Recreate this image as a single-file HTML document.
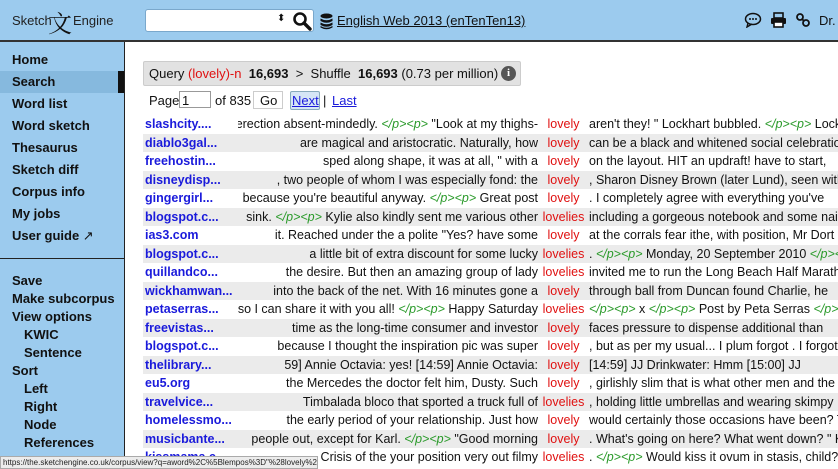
<!DOCTYPE html>
<html><head><meta charset="utf-8"><style>
*{margin:0;padding:0;box-sizing:border-box}
body{width:838px;height:469px;overflow:hidden;background:#fff;font-family:"Liberation Sans","DejaVu Sans",sans-serif;position:relative;color:#111}
.hdr{position:absolute;left:0;top:0;width:838px;height:42px;background:#9ccbee;border-bottom:2px solid #333}
.side{position:absolute;left:0;top:42px;width:125px;height:427px;background:#9ccbee;border-right:1px solid #222}
.side .it{position:absolute;left:12px;font-size:13px;font-weight:bold;color:#111;line-height:16px}
.side .sub{left:24px}
.side .sel{position:absolute;left:0;top:29px;width:124px;height:22px;background:#86b9de}
.side .selbar{position:absolute;left:118px;top:29px;width:6px;height:22px;background:#111}
.side .sep{position:absolute;left:0;top:216px;width:124px;height:1px;background:#222}
.a{position:absolute;font-size:13px;white-space:nowrap}
.row{position:absolute;left:143px;width:695px;height:18.5px;font-size:12.5px;line-height:18.5px;white-space:nowrap}
.row.g{background:#ebebeb}
.ref{position:absolute;left:2px;color:#1a1adb;font-weight:bold}
.lc{position:absolute;right:300px;width:300px;text-align:right;overflow:hidden;direction:rtl}
.lc span.in{direction:ltr;unicode-bidi:embed}
.kw{position:absolute;left:398px;width:45px;text-align:center;color:#e01010}
.rc{position:absolute;left:446px;overflow:hidden;width:260px}
.t{color:#2a9a2a;font-style:italic}
</style></head><body>
<div class="hdr">
 <div class="a" style="left:12px;top:13px;font-size:13px;color:#222">Sketch</div>
 <div class="a" style="left:48px;top:4px;font-size:24px;font-family:'Noto Serif CJK SC',serif;color:#111">文</div>
 <div class="a" style="left:73px;top:13px;font-size:13px;color:#222">Engine</div>
 <div style="position:absolute;left:145px;top:9px;width:169px;height:23px;background:#fff;border:1px solid #7aa8cc;border-radius:3px"></div>
 <div class="a" style="left:277px;top:13px;font-size:10px">⬍</div>
 <svg style="position:absolute;left:292px;top:11px" width="20" height="20" viewBox="0 0 20 20"><circle cx="8" cy="8" r="5.5" fill="none" stroke="#111" stroke-width="2.6"/><line x1="12" y1="12" x2="18" y2="18" stroke="#111" stroke-width="3.4" stroke-linecap="round"/></svg>
 <svg style="position:absolute;left:320px;top:13px" width="13" height="17" viewBox="0 0 13 17"><ellipse cx="6.5" cy="3" rx="6" ry="2.5" fill="#111"/><path d="M0.5 5.5 Q6.5 9 12.5 5.5 V8 Q6.5 11.5 0.5 8Z M0.5 9.5 Q6.5 13 12.5 9.5 V12 Q6.5 15.5 0.5 12Z M0.5 13 Q6.5 16.5 12.5 13 V14.5 Q6.5 18 0.5 14.5Z" fill="#111"/></svg>
 <div class="a" style="left:337px;top:13px;text-decoration:underline;color:#111">English Web 2013 (enTenTen13)</div>
 <svg style="position:absolute;left:744px;top:12px" width="18" height="16" viewBox="0 0 18 16"><ellipse cx="9" cy="7" rx="7.5" ry="5.5" fill="none" stroke="#111" stroke-width="1.5"/><path d="M4 11 L3 15 L8 12" fill="none" stroke="#111" stroke-width="1.4"/><circle cx="6" cy="7" r="1" fill="#111"/><circle cx="9" cy="7" r="1" fill="#111"/><circle cx="12" cy="7" r="1" fill="#111"/></svg>
 <svg style="position:absolute;left:770px;top:12px" width="17" height="16" viewBox="0 0 17 16"><rect x="4" y="1" width="9" height="5" fill="none" stroke="#111" stroke-width="1.6"/><rect x="1" y="6" width="15" height="6" rx="1" fill="#111"/><rect x="4" y="10" width="9" height="5" fill="#fff" stroke="#111" stroke-width="1.6"/></svg>
 <svg style="position:absolute;left:795px;top:12px" width="16" height="16" viewBox="0 0 16 16"><circle cx="5" cy="5" r="3" fill="none" stroke="#111" stroke-width="1.8"/><circle cx="11" cy="11" r="3" fill="none" stroke="#111" stroke-width="1.8"/><line x1="7" y1="7" x2="9" y2="9" stroke="#111" stroke-width="1.8"/></svg>
 <div class="a" style="left:819px;top:13px;color:#111">Dr.</div>
</div>
<div class="side">
 <div class="sel"></div><div class="selbar"></div>
 <div class="it" style="top:10px">Home</div>
 <div class="it" style="top:32px">Search</div>
 <div class="it" style="top:54px">Word list</div>
 <div class="it" style="top:76px">Word sketch</div>
 <div class="it" style="top:98px">Thesaurus</div>
 <div class="it" style="top:120px">Sketch diff</div>
 <div class="it" style="top:142px">Corpus info</div>
 <div class="it" style="top:164px">My jobs</div>
 <div class="it" style="top:186px">User guide <span style="font-weight:normal">↗</span></div>
 <div class="sep"></div>
 <div class="it" style="top:231px">Save</div>
 <div class="it" style="top:249px">Make subcorpus</div>
 <div class="it" style="top:267px">View options</div>
 <div class="it sub" style="top:285px">KWIC</div>
 <div class="it sub" style="top:303px">Sentence</div>
 <div class="it" style="top:321px">Sort</div>
 <div class="it sub" style="top:339px">Left</div>
 <div class="it sub" style="top:357px">Right</div>
 <div class="it sub" style="top:375px">Node</div>
 <div class="it sub" style="top:393px">References</div>
</div>
<div style="position:absolute;left:143px;top:61px;width:378px;height:25px;background:#e2e2e2;border:1px solid #ccc;border-radius:2px"></div>
<div class="a" style="left:149px;top:66px">Query <span style="color:#e01010">(lovely)-n</span>&nbsp; <b>16,693</b> &nbsp;&gt;&nbsp; Shuffle &nbsp;<b>16,693</b> (0.73 per million)</div>
<div style="position:absolute;left:501px;top:66px;width:15px;height:15px;border-radius:50%;background:#555;color:#fff;font-size:11px;font-weight:bold;text-align:center;line-height:15px;font-family:'Liberation Serif',serif">i</div>
<div class="a" style="left:149px;top:93px">Page</div>
<div style="position:absolute;left:179px;top:91px;width:32px;height:17px;border:1px solid #999"></div>
<div class="a" style="left:182px;top:93px">1</div>
<div class="a" style="left:215px;top:93px">of 835</div>
<div style="position:absolute;left:253px;top:91px;width:30px;height:18px;border:1px solid #ccc;background:#fff"></div>
<div class="a" style="left:260px;top:93px">Go</div>
<div style="position:absolute;left:290px;top:91px;width:30px;height:19px;border:1px solid #8ab;background:#d6e6f6;border-radius:2px"></div>
<div class="a" style="left:292px;top:93px;color:#1a1adb;text-decoration:underline">Next</div>
<div class="a" style="left:323px;top:93px">|</div>
<div class="a" style="left:332px;top:93px;color:#1a1adb;text-decoration:underline">Last</div>

<div class="row" style="top:115px"><span class="ref">slashcity....</span><span class="lc"><span class="in">erection absent-mindedly. <span class="t">&lt;/p&gt;&lt;p&gt;</span> "Look at my thighs-</span></span><span class="kw">lovely</span><span class="rc">aren't they! " Lockhart bubbled. <span class="t">&lt;/p&gt;&lt;p&gt;</span> Lockhart</span></div>
<div class="row g" style="top:133.5px"><span class="ref">diablo3gal...</span><span class="lc"><span class="in">are magical and aristocratic. Naturally, how</span></span><span class="kw">lovely</span><span class="rc">can be a black and whitened social celebration</span></div>
<div class="row" style="top:152px"><span class="ref">freehostin...</span><span class="lc"><span class="in">sped along shape, it was at all, " with a</span></span><span class="kw">lovely</span><span class="rc">on the layout. HIT an updraft! have to start,</span></div>
<div class="row g" style="top:170.5px"><span class="ref">disneydisp...</span><span class="lc"><span class="in">, two people of whom I was especially fond: the</span></span><span class="kw">lovely</span><span class="rc">, Sharon Disney Brown (later Lund), seen with</span></div>
<div class="row" style="top:189px"><span class="ref">gingergirl...</span><span class="lc"><span class="in">because you're beautiful anyway. <span class="t">&lt;/p&gt;&lt;p&gt;</span> Great post</span></span><span class="kw">lovely</span><span class="rc">. I completely agree with everything you've</span></div>
<div class="row g" style="top:207.5px"><span class="ref">blogspot.c...</span><span class="lc"><span class="in">sink. <span class="t">&lt;/p&gt;&lt;p&gt;</span> Kylie also kindly sent me various other</span></span><span class="kw">lovelies</span><span class="rc">including a gorgeous notebook and some nail</span></div>
<div class="row" style="top:226px"><span class="ref">ias3.com</span><span class="lc"><span class="in">it. Reached under the a polite "Yes? have some</span></span><span class="kw">lovely</span><span class="rc">at the corrals fear ithe, with position, Mr Dort</span></div>
<div class="row g" style="top:244.5px"><span class="ref">blogspot.c...</span><span class="lc"><span class="in">a little bit of extra discount for some lucky</span></span><span class="kw">lovelies</span><span class="rc">. <span class="t">&lt;/p&gt;&lt;p&gt;</span> Monday, 20 September 2010 <span class="t">&lt;/p&gt;&lt;p&gt;</span></span></div>
<div class="row" style="top:263px"><span class="ref">quillandco...</span><span class="lc"><span class="in">the desire. But then an amazing group of lady</span></span><span class="kw">lovelies</span><span class="rc">invited me to run the Long Beach Half Marathon</span></div>
<div class="row g" style="top:281.5px"><span class="ref">wickhamwan...</span><span class="lc"><span class="in">into the back of the net. With 16 minutes gone a</span></span><span class="kw">lovely</span><span class="rc">through ball from Duncan found Charlie, he</span></div>
<div class="row" style="top:300px"><span class="ref">petaserras...</span><span class="lc"><span class="in">so I can share it with you all! <span class="t">&lt;/p&gt;&lt;p&gt;</span> Happy Saturday</span></span><span class="kw">lovelies</span><span class="rc"><span class="t">&lt;/p&gt;&lt;p&gt;</span> x <span class="t">&lt;/p&gt;&lt;p&gt;</span> Post by Peta Serras <span class="t">&lt;/p&gt;&lt;p&gt;</span></span></div>
<div class="row g" style="top:318.5px"><span class="ref">freevistas...</span><span class="lc"><span class="in">time as the long-time consumer and investor</span></span><span class="kw">lovely</span><span class="rc">faces pressure to dispense additional than</span></div>
<div class="row" style="top:337px"><span class="ref">blogspot.c...</span><span class="lc"><span class="in">because I thought the inspiration pic was super</span></span><span class="kw">lovely</span><span class="rc">, but as per my usual... I plum forgot . I forgot</span></div>
<div class="row g" style="top:355.5px"><span class="ref">thelibrary...</span><span class="lc"><span class="in">59] Annie Octavia: yes! [14:59] Annie Octavia:</span></span><span class="kw">lovely</span><span class="rc">[14:59] JJ Drinkwater: Hmm [15:00] JJ</span></div>
<div class="row" style="top:374px"><span class="ref">eu5.org</span><span class="lc"><span class="in">the Mercedes the doctor felt him, Dusty. Such</span></span><span class="kw">lovely</span><span class="rc">, girlishly slim that is what other men and the</span></div>
<div class="row g" style="top:392.5px"><span class="ref">travelvice...</span><span class="lc"><span class="in">Timbalada bloco that sported a truck full of</span></span><span class="kw">lovelies</span><span class="rc">, holding little umbrellas and wearing skimpy</span></div>
<div class="row" style="top:411px"><span class="ref">homelessmo...</span><span class="lc"><span class="in">the early period of your relationship. Just how</span></span><span class="kw">lovely</span><span class="rc">would certainly those occasions have been? Th</span></div>
<div class="row g" style="top:429.5px"><span class="ref">musicbante...</span><span class="lc"><span class="in">people out, except for Karl. <span class="t">&lt;/p&gt;&lt;p&gt;</span> "Good morning</span></span><span class="kw">lovely</span><span class="rc">. What's going on here? What went down? " Ka</span></div>
<div class="row" style="top:448px"><span class="ref">kissmama.c...</span><span class="lc"><span class="in">Crisis of the your position very out filmy</span></span><span class="kw">lovelies</span><span class="rc">. <span class="t">&lt;/p&gt;&lt;p&gt;</span> Would kiss it ovum in stasis, child?</span></div>
<div style="position:absolute;left:0;top:456px;width:318px;height:13px;background:#ececec;border:1px solid #aaa;font-size:8px;line-height:11px;padding-left:2px;white-space:nowrap;overflow:hidden;color:#222">https://the.sketchengine.co.uk/corpus/view?q=aword%2C%5Blempos%3D"%28lovely%29-n"%5D&amp;q=f;f</div>
</body></html>
